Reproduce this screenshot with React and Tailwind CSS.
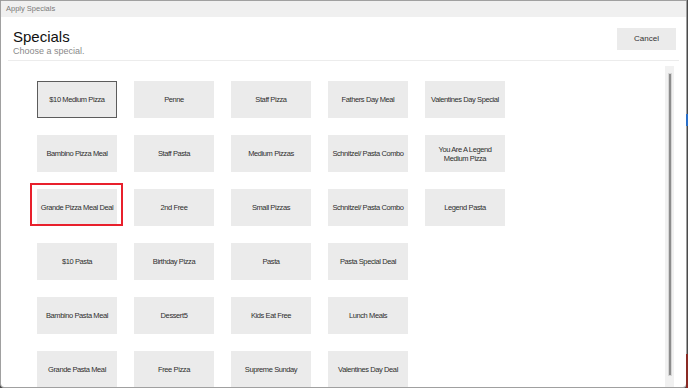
const specials = [
  "$10 Medium Pizza",
  "Penne",
  "Staff Pizza",
  "Fathers Day Meal",
  "Valentines Day Special",
  "Bambino Pizza Meal",
  "Staff Pasta",
  "Medium Pizzas",
  "Schnitzel/ Pasta Combo",
  ["You Are A Legend", "Medium Pizza"],
  "Grande Pizza Meal Deal",
  "2nd Free",
  "Small Pizzas",
  "Schnitzel/ Pasta Combo",
  "Legend Pasta",
  "$10 Pasta",
  "Birthday Pizza",
  "Pasta",
  "Pasta Special Deal",
  null,
  "Bambino Pasta Meal",
  "Dessert5",
  "Kids Eat Free",
  "Lunch Meals",
  null,
  "Grande Pasta Meal",
  "Free Pizza",
  "Supreme Sunday",
  "Valentines Day Deal",
  null,
];

const SpecialButton = ({ label, selected, highlighted }) => {
  if (!label) {
    return <div />;
  }

  return (
    <div className="relative">
      <button
        type="button"
        className={`flex h-[37px] w-[80px] flex-col items-center justify-center whitespace-nowrap bg-[#ebebeb] text-center text-[7.5px] leading-[9px] tracking-[-0.4px] text-[#2e2e2e] ${
          selected ? "border border-[#5c5c5c]" : ""
        }`}
      >
        {Array.isArray(label) ? label.map((line) => <span key={line}>{line}</span>) : label}
      </button>
      {highlighted && (
        <div className="pointer-events-none absolute -left-[7px] -top-[6px] h-[43px] w-[93px] border-2 border-[#e8202c]" />
      )}
    </div>
  );
};

export default function App() {
  return (
    <div
      className="relative h-[388px] w-[688px] overflow-hidden bg-[#4a4a4a]"
      style={{ fontFamily: '"Liberation Sans", Arial, sans-serif' }}
    >
      <div className="absolute right-0 top-[114px] h-[12px] w-[2px] bg-[#2a6fc9]" />
      <div className="absolute bottom-0 right-0 h-[34px] w-[2px] bg-[#8a2a24]" />

      <div className="flex h-[388px] w-[687px] flex-col overflow-hidden rounded-b-[4px] border border-[#a0a0a0] bg-white">
        <div className="flex h-[16px] shrink-0 items-center bg-[#f0f0f0] px-[5px] text-[7.5px] text-[#7a7a7a]">
          Apply Specials
        </div>

        <div className="flex h-[43px] shrink-0 items-start justify-between pl-[12px] pr-[10px] pt-[11px]">
          <div>
            <h1 className="text-[15px] leading-[18px] text-[#111]">Specials</h1>
            <p className="text-[9px] leading-[10px] text-[#8a8a8a]">Choose a special.</p>
          </div>
          <button
            type="button"
            className="h-[22px] w-[59px] bg-[#ebebeb] text-[8px] text-[#333]"
          >
            Cancel
          </button>
        </div>

        <div className="mx-[7px] h-px shrink-0 bg-[#ececec]" />

        <div className="flex min-h-0 flex-1">
          <div className="grid flex-1 grid-cols-[repeat(5,80px)] content-start gap-[17px] pl-[36px] pt-[20px]">
            {specials.map((label, i) => (
              <SpecialButton
                key={i}
                label={label}
                selected={i === 0}
                highlighted={i === 10}
              />
            ))}
          </div>
          <div className="mr-[12px] mt-[5px] flex w-[9px] shrink-0 justify-center bg-[#f1f1f1] pb-[12px] pt-[8px]">
            <div className="w-[2px] bg-[#8c8c8c] shadow-[0_0_0_1px_#d6d6d6]" />
          </div>
        </div>
      </div>
    </div>
  );
}
